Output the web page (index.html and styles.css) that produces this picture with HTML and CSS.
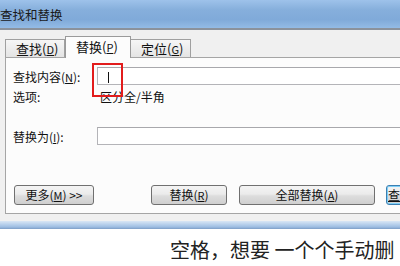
FILE: index.html
```html
<!DOCTYPE html>
<html>
<head>
<meta charset="utf-8">
<link rel="stylesheet" href="styles.css">
</head>
<body>
<div class="screen">
  <div class="titlebar"><span class="title">查找和替换</span></div>
  <div class="window">
    <div class="tabs">
      <div class="tab">查找(<u>D</u>)</div>
      <div class="tab active">替换(<u>P</u>)</div>
      <div class="tab">定位(<u>G</u>)</div>
    </div>
    <div class="panel">
      <div class="row row-find">
        <span class="label">查找内容(<u>N</u>):</span>
        <div class="input"><span class="caret"></span></div>
      </div>
      <div class="row row-opt">
        <span class="label">选项:</span>
        <span class="opt">区分全/半角</span>
      </div>
      <div class="row row-repl">
        <span class="label">替换为(<u>I</u>):</span>
        <div class="input"></div>
      </div>
      <div class="buttons">
        <div class="btn btn-more">更多(<u>M</u>) &gt;&gt;</div>
        <div class="btn btn-repl">替换(<u>R</u>)</div>
        <div class="btn btn-all">全部替换(<u>A</u>)</div>
        <div class="btn btn-find"><u>查</u></div>
      </div>
    </div>
    <div class="gap"></div>
  </div>
  <div class="strip"></div>
  <div class="article">空格，想要 一个个手动删</div>
  <div class="redbox"></div>
</div>
</body>
</html>
```

FILE: styles.css
```css
html, body {
  margin: 0;
  padding: 0;
  background: #ffffff;
}
.screen {
  position: relative;
  width: 400px;
  height: 266px;
  overflow: hidden;
  font-family: "Noto Sans CJK SC", "DejaVu Sans", sans-serif;
  font-size: 12px;
  color: #111;
}
.titlebar {
  height: 28px;
  background: linear-gradient(#9ec2ea 0%, #86afdc 35%, #80aad9 70%, #93bbe6 100%);
  border-bottom: 2px solid #8b929c;
  display: flex;
  align-items: center;
}
.title {
  font-size: 12.5px;
  color: #1a1a1a;
  line-height: 14px;
  padding-top: 2px;
}
.window {
  background: #f0f0f0;
  padding-left: 5px;
}
.tabs {
  height: 27px;
  display: flex;
  align-items: flex-end;
  position: relative;
  z-index: 2;
}
.tab {
  height: 18px;
  line-height: 18px;
  box-sizing: border-box;
  border: 1px solid #a0a0a0;
  border-bottom: none;
  background: linear-gradient(#f6f6f6, #e4e4e4);
  font-size: 13px;
  color: #111;
  padding-left: 10px;
  width: 60px;
}
.tab.active {
  height: 22px;
  width: 66px;
  background: #fcfcfc;
  line-height: 20px;
  margin-bottom: -1px;
  border-color: #9a9a9a;
}
.tab:last-child { border-left: none; }
.tab u, .label u, .btn u { text-decoration: underline; font-size: 11px; }
.btn-find u { font-size: 12px; }
.panel {
  width: 420px;
  box-sizing: border-box;
  background: #fcfcfc;
  border: 1px solid #a5a5a5;
  border-right: none;
  padding: 9px 0 8px 7px;
}
.row {
  display: flex;
  align-items: center;
}
.label {
  width: 84px;
  flex: none;
  white-space: nowrap;
}
.row-find { height: 18px; }
.row-opt { height: 16px; margin-top: 3px; }
.row-opt .opt { margin-left: 3px; }
.row-repl { height: 18px; margin-top: 23px; }
.input {
  flex: 1;
  height: 18px;
  box-sizing: border-box;
  border: 1px solid #b4b4b8;
  border-top-color: #a8a8ac;
  background: #ffffff;
  position: relative;
}
.caret {
  position: absolute;
  left: 10px;
  top: 4px;
  width: 1px;
  height: 11px;
  background: #111;
}
.buttons {
  display: flex;
  margin-top: 40px;
  padding-left: 1px;
}
.btn {
  height: 20px;
  line-height: 18px;
  box-sizing: border-box;
  border: 1px solid #707070;
  border-radius: 3px;
  background: linear-gradient(#f4f4f4 0%, #ebebeb 45%, #dddddd 55%, #cfcfcf 100%);
  text-align: center;
  white-space: nowrap;
  flex: none;
  color: #111;
}
.btn-more { width: 80px; }
.btn-repl { width: 76px; margin-left: 57px; }
.btn-all { width: 136px; margin-left: 12px; }
.btn-find {
  width: 80px;
  margin-left: 11px;
  border-color: #3c7fb1;
  box-shadow: inset 0 0 0 1px #7fd0f8;
  text-align: left;
  padding-left: 1px;
}
.gap { height: 7px; }
.strip {
  height: 8px;
  background: linear-gradient(#d9e6f4 0%, #b9d1ec 40%, #9dbde2 75%, #7d9ec6 100%);
}
.article {
  height: 36px;
  box-sizing: border-box;
  padding: 10px 0 0 170px;
  font-size: 20px;
  line-height: 22px;
  color: #222;
  white-space: nowrap;
}
.redbox {
  position: absolute;
  left: 92px;
  top: 63px;
  width: 31px;
  height: 34px;
  box-sizing: border-box;
  border: 2px solid #e21c1c;
}
```
